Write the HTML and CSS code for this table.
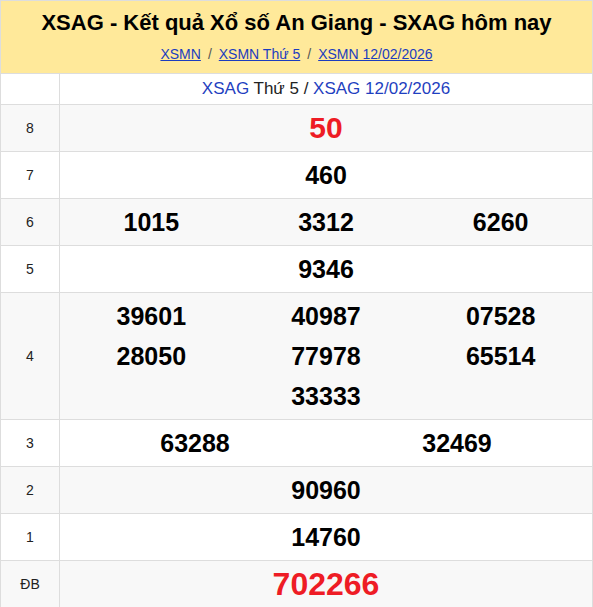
FILE: index.html
```html
<!DOCTYPE html>
<html lang="vi">
<head>
<meta charset="utf-8">
<title>XSAG</title>
<link rel="stylesheet" href="styles.css">
</head>
<body>
<div class="box">
  <div class="header">
    <h1 class="title">XSAG - Kết quả Xổ số An Giang - SXAG hôm nay</h1>
    <div class="crumbs">
      <a href="#">XSMN</a><span class="sep">/</span><a href="#">XSMN Thứ 5</a><span class="sep">/</span><a href="#">XSMN 12/02/2026</a>
    </div>
  </div>
  <table class="results">
    <tr class="head">
      <td class="rank"></td>
      <td class="caption"><a href="#">XSAG</a> Thứ 5 / <a href="#">XSAG 12/02/2026</a></td>
    </tr>
    <tr class="alt">
      <td class="rank">8</td>
      <td><div class="nums one"><span class="n red big">50</span></div></td>
    </tr>
    <tr>
      <td class="rank">7</td>
      <td><div class="nums one"><span class="n">460</span></div></td>
    </tr>
    <tr class="alt">
      <td class="rank">6</td>
      <td><div class="nums three"><span class="n">1015</span><span class="n">3312</span><span class="n">6260</span></div></td>
    </tr>
    <tr>
      <td class="rank">5</td>
      <td><div class="nums one"><span class="n">9346</span></div></td>
    </tr>
    <tr class="alt">
      <td class="rank">4</td>
      <td><div class="nums three multi"><span class="n">39601</span><span class="n">40987</span><span class="n">07528</span><span class="n">28050</span><span class="n">77978</span><span class="n">65514</span><span class="n"></span><span class="n">33333</span><span class="n"></span></div></td>
    </tr>
    <tr>
      <td class="rank">3</td>
      <td><div class="nums two"><span class="n">63288</span><span class="n">32469</span></div></td>
    </tr>
    <tr class="alt">
      <td class="rank">2</td>
      <td><div class="nums one"><span class="n">90960</span></div></td>
    </tr>
    <tr>
      <td class="rank">1</td>
      <td><div class="nums one"><span class="n">14760</span></div></td>
    </tr>
    <tr class="alt">
      <td class="rank">ĐB</td>
      <td><div class="nums one"><span class="n red huge">702266</span></div></td>
    </tr>
  </table>
</div>
</body>
</html>
```

FILE: styles.css
```css
* { box-sizing: border-box; }
html, body { margin: 0; padding: 0; background: #fff; }
body { font-family: "Liberation Sans", Arial, sans-serif; color: #000; }

.box { width: 593px; }

.header {
  background: #ffe99a;
  border: 1px solid #dddddd;
  border-bottom: none;
  height: 73px;
  text-align: center;
  padding-top: 9px;
}
.title {
  margin: 0;
  font-size: 22px;
  line-height: 26px;
  font-weight: bold;
  color: #000;
}
.crumbs {
  margin-top: 10px;
  font-size: 14px;
  line-height: 16px;
  color: #333;
}
.crumbs a { color: #1c3dbf; text-decoration: underline; }
.crumbs .sep { margin: 0 7px; color: #555; }

.results {
  width: 593px;
  border-collapse: collapse;
  table-layout: fixed;
}
.results td {
  border: 1px solid #dddddd;
  padding: 0;
  vertical-align: middle;
}
.results tr.alt td { background: #f8f8f8; }
.results td.rank {
  width: 59px;
  text-align: center;
  font-size: 14px;
  color: #222;
}
.results tr.head td { height: 31px; }
.caption {
  text-align: center;
  font-size: 17px;
  color: #222;
}
.caption a { color: #1f3fc0; text-decoration: none; }

.nums {
  display: grid;
  height: 46px;
  padding: 0 4px;
  align-items: center;
  text-align: center;
}
.nums.one { grid-template-columns: 1fr; }
.nums.two { grid-template-columns: 1fr 1fr; }
.nums.three { grid-template-columns: 1fr 1fr 1fr; }
.nums.multi {
  height: 126px;
  grid-auto-rows: 40px;
  align-content: center;
}
.n {
  font-size: 25px;
  font-weight: bold;
  line-height: 40px;
  color: #000;
}
.n.red { color: #ee1c25; }
.n.big { font-size: 30px; }
.n.huge { font-size: 32px; }
```
